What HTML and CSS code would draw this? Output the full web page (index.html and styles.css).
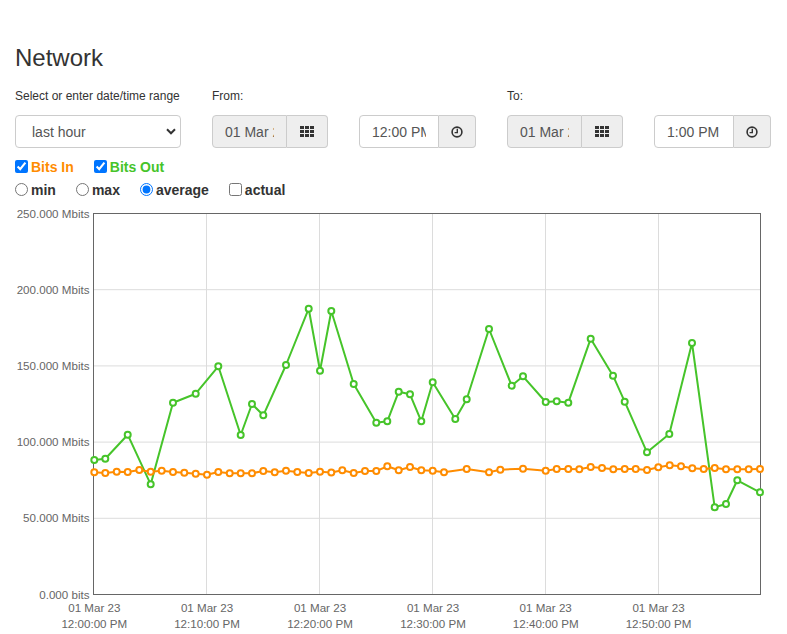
FILE: index.html
```html
<!DOCTYPE html>
<html lang="en">
<head>
<meta charset="utf-8">
<title>Network</title>
<link rel="stylesheet" href="styles.css">
</head>
<body>
<div class="page">
  <h1 class="title">Network</h1>

  <div class="filters">
    <div class="col col-range">
      <label class="lbl">Select or enter date/time range</label>
      <div class="select">
        <span>last hour</span>
        <svg class="chev" width="10" height="7" viewBox="0 0 10 7"><polyline points="1,1.3 5,5.3 9,1.3" fill="none" stroke="#333" stroke-width="2"/></svg>
      </div>
    </div>
    <div class="col col-date">
      <label class="lbl">From:</label>
      <div class="igroup">
        <input class="field field-date" type="text" value="01 Mar 2023" readonly>
        <span class="addon addon-date">
          <svg width="14" height="11" viewBox="0 0 14 11" fill="#333"><rect x="0" y="0" width="4" height="3"/><rect x="5" y="0" width="4" height="3"/><rect x="10" y="0" width="4" height="3"/><rect x="0" y="4" width="4" height="3"/><rect x="5" y="4" width="4" height="3"/><rect x="10" y="4" width="4" height="3"/><rect x="0" y="8" width="4" height="3"/><rect x="5" y="8" width="4" height="3"/><rect x="10" y="8" width="4" height="3"/></svg>
        </span>
      </div>
    </div>
    <div class="col col-time">
      <span class="lbl">&nbsp;</span>
      <div class="igroup">
        <input class="field field-time" type="text" value="12:00 PM">
        <span class="addon addon-time">
          <svg width="12" height="12" viewBox="0 0 12 12"><circle cx="6" cy="6" r="4.9" fill="none" stroke="#333" stroke-width="1.6"/><polyline points="6.3,2.8 6.3,6.6 3.6,6.6" fill="none" stroke="#333" stroke-width="1.4"/></svg>
        </span>
      </div>
    </div>
    <div class="col col-date">
      <label class="lbl">To:</label>
      <div class="igroup">
        <input class="field field-date" type="text" value="01 Mar 2023" readonly>
        <span class="addon addon-date">
          <svg width="14" height="11" viewBox="0 0 14 11" fill="#333"><rect x="0" y="0" width="4" height="3"/><rect x="5" y="0" width="4" height="3"/><rect x="10" y="0" width="4" height="3"/><rect x="0" y="4" width="4" height="3"/><rect x="5" y="4" width="4" height="3"/><rect x="10" y="4" width="4" height="3"/><rect x="0" y="8" width="4" height="3"/><rect x="5" y="8" width="4" height="3"/><rect x="10" y="8" width="4" height="3"/></svg>
        </span>
      </div>
    </div>
    <div class="col col-time">
      <span class="lbl">&nbsp;</span>
      <div class="igroup">
        <input class="field field-time" type="text" value="1:00 PM">
        <span class="addon addon-time">
          <svg width="12" height="12" viewBox="0 0 12 12"><circle cx="6" cy="6" r="4.9" fill="none" stroke="#333" stroke-width="1.6"/><polyline points="6.3,2.8 6.3,6.6 3.6,6.6" fill="none" stroke="#333" stroke-width="1.4"/></svg>
        </span>
      </div>
    </div>
  </div>

  <div class="opts opts-series">
    <label class="opt"><input type="checkbox" checked><span class="in">Bits In</span></label>
    <label class="opt"><input type="checkbox" checked><span class="out">Bits Out</span></label>
  </div>
  <div class="opts opts-mode">
    <label class="opt"><input type="radio" name="mode">min</label>
    <label class="opt"><input type="radio" name="mode">max</label>
    <label class="opt"><input type="radio" name="mode" checked>average</label>
    <label class="opt"><input type="checkbox">actual</label>
  </div>

  <svg class="chart" width="772" height="432" viewBox="15 202 772 432">
    <g class="grid" stroke="#dcdcdc" stroke-width="1">
      <line x1="93.5" y1="289.7" x2="760.5" y2="289.7"/>
      <line x1="93.5" y1="365.9" x2="760.5" y2="365.9"/>
      <line x1="93.5" y1="442.1" x2="760.5" y2="442.1"/>
      <line x1="93.5" y1="518.3" x2="760.5" y2="518.3"/>
      <line x1="206.5" y1="213.5" x2="206.5" y2="594.5"/>
      <line x1="319.5" y1="213.5" x2="319.5" y2="594.5"/>
      <line x1="432.5" y1="213.5" x2="432.5" y2="594.5"/>
      <line x1="545.5" y1="213.5" x2="545.5" y2="594.5"/>
      <line x1="658.5" y1="213.5" x2="658.5" y2="594.5"/>
    </g>
    <rect x="93.5" y="213.5" width="667" height="381" fill="none" stroke="#666" stroke-width="1"/>
    <g class="ylab" font-family="'Liberation Sans', Arial, sans-serif" font-size="11.6" fill="#666" text-anchor="end">
      <text x="89.5" y="217.5">250.000 Mbits</text>
      <text x="89.5" y="293.7">200.000 Mbits</text>
      <text x="89.5" y="369.9">150.000 Mbits</text>
      <text x="89.5" y="446.1">100.000 Mbits</text>
      <text x="89.5" y="522.3">50.000 Mbits</text>
      <text x="89.5" y="598.5">0.000 bits</text>
    </g>
    <g class="xlab" font-family="'Liberation Sans', Arial, sans-serif" font-size="11.6" fill="#666" text-anchor="middle">
      <text x="94.3" y="611.7">01 Mar 23</text><text x="94.3" y="628.3">12:00:00 PM</text>
      <text x="207" y="611.7">01 Mar 23</text><text x="207" y="628.3">12:10:00 PM</text>
      <text x="320" y="611.7">01 Mar 23</text><text x="320" y="628.3">12:20:00 PM</text>
      <text x="433" y="611.7">01 Mar 23</text><text x="433" y="628.3">12:30:00 PM</text>
      <text x="545.7" y="611.7">01 Mar 23</text><text x="545.7" y="628.3">12:40:00 PM</text>
      <text x="658.5" y="611.7">01 Mar 23</text><text x="658.5" y="628.3">12:50:00 PM</text>
    </g>
    <g class="series-out">
      <polyline fill="none" stroke="#46c42a" stroke-width="2" stroke-linejoin="round" points="94.3,460 105.3,458.7 127.7,434.7 150.7,484.3 173,402.7 195.7,393.7 218.3,366.3 240.7,435 252,404 263.3,415.3 286,365 308.7,308.7 320,370.7 331.3,311 353.7,384 376.3,422.7 387.3,421.3 398.7,391.7 410,394.3 421.3,421.3 432.7,382.3 455.3,419 466.7,399.3 489,329 511.7,385.7 523,376.3 545.7,402 556.7,401.3 568.3,402.7 590.7,338.7 613,375.7 624.7,401.7 647,452.3 669.3,434 692,343 714.7,507.3 726,504 737.3,480.3 760,492.3"/>
      <g fill="#fff" stroke="#46c42a" stroke-width="2">
        <circle cx="94.3" cy="460" r="3"/><circle cx="105.3" cy="458.7" r="3"/><circle cx="127.7" cy="434.7" r="3"/><circle cx="150.7" cy="484.3" r="3"/><circle cx="173" cy="402.7" r="3"/><circle cx="195.7" cy="393.7" r="3"/><circle cx="218.3" cy="366.3" r="3"/><circle cx="240.7" cy="435" r="3"/><circle cx="252" cy="404" r="3"/><circle cx="263.3" cy="415.3" r="3"/><circle cx="286" cy="365" r="3"/><circle cx="308.7" cy="308.7" r="3"/><circle cx="320" cy="370.7" r="3"/><circle cx="331.3" cy="311" r="3"/><circle cx="353.7" cy="384" r="3"/><circle cx="376.3" cy="422.7" r="3"/><circle cx="387.3" cy="421.3" r="3"/><circle cx="398.7" cy="391.7" r="3"/><circle cx="410" cy="394.3" r="3"/><circle cx="421.3" cy="421.3" r="3"/><circle cx="432.7" cy="382.3" r="3"/><circle cx="455.3" cy="419" r="3"/><circle cx="466.7" cy="399.3" r="3"/><circle cx="489" cy="329" r="3"/><circle cx="511.7" cy="385.7" r="3"/><circle cx="523" cy="376.3" r="3"/><circle cx="545.7" cy="402" r="3"/><circle cx="556.7" cy="401.3" r="3"/><circle cx="568.3" cy="402.7" r="3"/><circle cx="590.7" cy="338.7" r="3"/><circle cx="613" cy="375.7" r="3"/><circle cx="624.7" cy="401.7" r="3"/><circle cx="647" cy="452.3" r="3"/><circle cx="669.3" cy="434" r="3"/><circle cx="692" cy="343" r="3"/><circle cx="714.7" cy="507.3" r="3"/><circle cx="726" cy="504" r="3"/><circle cx="737.3" cy="480.3" r="3"/><circle cx="760" cy="492.3" r="3"/>
      </g>
    </g>
    <g class="series-in">
      <polyline fill="none" stroke="#ff8c00" stroke-width="2" stroke-linejoin="round" points="94.3,472.3 105.3,473 116.7,471.7 127.7,472 139.3,470 150.7,471.7 161.7,470.7 173,472 184.3,472.7 195.7,473.7 207,474.7 218.3,472 229.7,473.3 240.7,473.3 252,473.3 263.3,471 274.7,472.3 286,470.7 297.3,472 308.7,473 320,471.7 331.3,472.5 342.3,470.3 353.7,473 365,471 376.3,471 387.3,466.3 398.7,470.3 410,467 421.3,470.3 432.7,470.7 444,472.3 466.7,469 489,472.3 500.3,469.7 523,468.7 545.7,470.7 556.7,469 568.3,469 579.3,469.3 590.7,467 602,468 613.3,469.3 624.7,469 635.7,469 647,470 658.3,467.3 669.7,465.3 681,466.3 692.3,468.3 703.7,469 714.7,468 726,469.3 737.3,469.3 748.7,469.3 760,469"/>
      <g fill="#fff" stroke="#ff8c00" stroke-width="2">
        <circle cx="94.3" cy="472.3" r="3"/><circle cx="105.3" cy="473" r="3"/><circle cx="116.7" cy="471.7" r="3"/><circle cx="127.7" cy="472" r="3"/><circle cx="139.3" cy="470" r="3"/><circle cx="150.7" cy="471.7" r="3"/><circle cx="161.7" cy="470.7" r="3"/><circle cx="173" cy="472" r="3"/><circle cx="184.3" cy="472.7" r="3"/><circle cx="195.7" cy="473.7" r="3"/><circle cx="207" cy="474.7" r="3"/><circle cx="218.3" cy="472" r="3"/><circle cx="229.7" cy="473.3" r="3"/><circle cx="240.7" cy="473.3" r="3"/><circle cx="252" cy="473.3" r="3"/><circle cx="263.3" cy="471" r="3"/><circle cx="274.7" cy="472.3" r="3"/><circle cx="286" cy="470.7" r="3"/><circle cx="297.3" cy="472" r="3"/><circle cx="308.7" cy="473" r="3"/><circle cx="320" cy="471.7" r="3"/><circle cx="331.3" cy="472.5" r="3"/><circle cx="342.3" cy="470.3" r="3"/><circle cx="353.7" cy="473" r="3"/><circle cx="365" cy="471" r="3"/><circle cx="376.3" cy="471" r="3"/><circle cx="387.3" cy="466.3" r="3"/><circle cx="398.7" cy="470.3" r="3"/><circle cx="410" cy="467" r="3"/><circle cx="421.3" cy="470.3" r="3"/><circle cx="432.7" cy="470.7" r="3"/><circle cx="444" cy="472.3" r="3"/><circle cx="466.7" cy="469" r="3"/><circle cx="489" cy="472.3" r="3"/><circle cx="500.3" cy="469.7" r="3"/><circle cx="523" cy="468.7" r="3"/><circle cx="545.7" cy="470.7" r="3"/><circle cx="556.7" cy="469" r="3"/><circle cx="568.3" cy="469" r="3"/><circle cx="579.3" cy="469.3" r="3"/><circle cx="590.7" cy="467" r="3"/><circle cx="602" cy="468" r="3"/><circle cx="613.3" cy="469.3" r="3"/><circle cx="624.7" cy="469" r="3"/><circle cx="635.7" cy="469" r="3"/><circle cx="647" cy="470" r="3"/><circle cx="658.3" cy="467.3" r="3"/><circle cx="669.7" cy="465.3" r="3"/><circle cx="681" cy="466.3" r="3"/><circle cx="692.3" cy="468.3" r="3"/><circle cx="703.7" cy="469" r="3"/><circle cx="714.7" cy="468" r="3"/><circle cx="726" cy="469.3" r="3"/><circle cx="737.3" cy="469.3" r="3"/><circle cx="748.7" cy="469.3" r="3"/><circle cx="760" cy="469" r="3"/>
      </g>
    </g>
  </svg>
</div>
</body>
</html>
```

FILE: styles.css
```css
html, body {
  margin: 0;
  padding: 0;
  background: #fff;
}
body {
  font-family: "Liberation Sans", Arial, sans-serif;
  font-size: 14px;
  color: #333;
  overflow: hidden;
}
.page {
  padding: 45px 0 0 15px;
}
.title {
  margin: 0;
  font-size: 24px;
  line-height: 26px;
  font-weight: 500;
  color: #333;
}
.filters {
  display: flex;
  gap: 31px;
  margin-top: 17px;
}
.col {
  display: flex;
  flex-direction: column;
}
.col-range { width: 166px; }
.col-date { width: 116px; }
.col-time { width: 117px; }
.lbl {
  display: block;
  font-size: 12px;
  line-height: 17px;
  margin-bottom: 10px;
  color: #333;
  white-space: nowrap;
}
.select {
  box-sizing: border-box;
  height: 33px;
  border: 1px solid #ccc;
  border-radius: 4px;
  padding: 0 4px 0 16px;
  display: flex;
  align-items: center;
  justify-content: space-between;
  font-size: 14px;
  color: #555;
  background: #fff;
}
.chev { display: block; }
.igroup {
  display: flex;
  height: 33px;
}
.field {
  box-sizing: border-box;
  height: 33px;
  margin: 0;
  border: 1px solid #ccc;
  border-radius: 4px 0 0 4px;
  padding: 0 12px;
  font-family: "Liberation Sans", Arial, sans-serif;
  font-size: 14px;
  color: #555;
  background: #fff;
  outline: none;
}
.field-date { width: 75px; background: #eee; }
.field-time { width: 80px; }
.addon {
  box-sizing: border-box;
  height: 33px;
  border: 1px solid #ccc;
  border-left: 0;
  border-radius: 0 4px 4px 0;
  background: #eee;
  display: flex;
  align-items: center;
  justify-content: center;
}
.addon svg { display: block; }
.addon-date { width: 41px; }
.addon-time { width: 37px; }
.opts {
  display: flex;
  gap: 20px;
  line-height: 23px;
  height: 23px;
  font-weight: bold;
  font-size: 14px;
  color: #333;
}
.opts-series { margin-top: 8px; }
.opt { white-space: nowrap; }
.opt input {
  margin: 0 3px 0 0;
  width: 13px;
  height: 13px;
  vertical-align: -1px;
}
.in { color: #ff8c00; }
.out { color: #46c42a; }
.chart {
  display: block;
}
```
